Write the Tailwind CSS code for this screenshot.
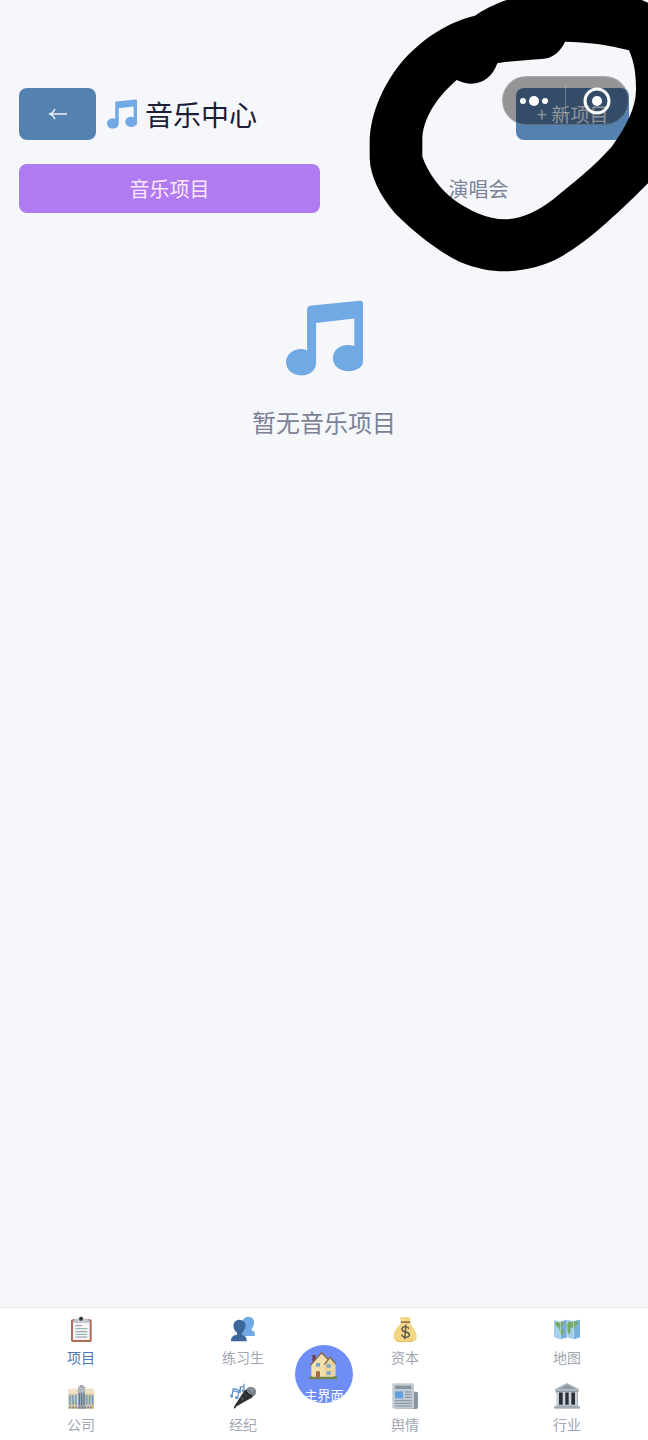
<!DOCTYPE html>
<html lang="zh-CN">
<head>
  <meta charset="UTF-8">
  <meta name="viewport" content="width=device-width, initial-scale=1.0">
  <title>音乐中心</title>
  <script src="https://cdn.jsdelivr.net/npm/@tailwindcss/browser@4"></script>
</head>

<body class="relative flex min-h-screen flex-col overflow-x-hidden bg-[#f5f7fb] font-['Noto_Sans_CJK_SC',sans-serif]">

  <!-- 共用图标 -->
  <svg class="hidden">
    <symbol id="note" viewBox="0 0 230 224">
      <path fill="#71a9e4" d="M63 26q0-8 8-10L220 1q10-1 10 8v174c0 16-19 28-45 28-27 0-45-17-45-39s19-39 45-39q11 0 19 3V54L90 67v118c0 23-19 39-45 39S0 206 0 184s20-39 45-39q10 0 18 4z"/>
    </symbol>
  </svg>

  <!-- 标题栏 -->
  <header class="flex items-center px-[19px] pt-22">
    <button type="button" aria-label="返回" class="flex h-[52px] w-[77px] items-center justify-center rounded-lg bg-[#5581b0]">
      <svg class="h-4 w-5" viewBox="0 0 20 16" fill="none" stroke="#e8f0f8" stroke-width="1.5"><path d="M19 8H2M7 3Q5 7 2 8q3 1 5 5"/></svg>
    </button>
    <h1 class="ml-[11px] flex items-center gap-2 text-[28px] leading-10 text-[#1c2036]">
      <svg class="h-[30px] w-[30px]"><use href="#note"/></svg>
      音乐中心
    </h1>
    <button type="button" class="ml-auto h-[52px] w-[113px] rounded-lg bg-[#5581b0] text-[19px] text-[#f0f4fa]">+ 新项目</button>
  </header>

  <!-- 标签切换 -->
  <div class="mt-6 flex gap-2 px-[19px]">
    <button type="button" class="h-[49px] flex-1 rounded-lg bg-[#b07af0] text-[20px] text-[#fbe9fb]">音乐项目</button>
    <button type="button" class="h-[49px] flex-1 rounded-lg text-[20px] text-[#7c8298]">演唱会</button>
  </div>

  <!-- 空状态 -->
  <main class="flex flex-1 flex-col items-center pt-[87px]">
    <svg class="h-[76px] w-[77px]"><use href="#note"/></svg>
    <p class="mt-7 text-[24px] leading-9 text-[#7c8296]">暂无音乐项目</p>
  </main>

  <!-- 底部导航 -->
  <nav class="relative grid grid-cols-4 gap-y-[9px] border-t border-[#e6e8ee] bg-white pt-[7px] text-center text-[14px] leading-5 text-[#a0a5b1]">
    <a href="#project" class="flex h-[58px] flex-col items-center gap-1 text-[#4a78ba]">
      <svg class="h-7 w-7" viewBox="0 0 84 84">
        <rect x="12" y="13" width="62" height="68" rx="5" fill="#b06a58"/>
        <path fill="#f6f4f5" d="M18 19h50v56H18z"/>
        <path fill="#c4c9d1" d="M16 24q3-12 18-14h3q6-11 12 0h3q14 2 18 14z"/>
        <circle cx="42" cy="11" r="6" fill="#30343b"/>
        <path stroke="#8c9aa6" stroke-width="3" d="M25 32h21M25 50h36M25 66h36"/>
        <path stroke="#78b1ac" stroke-width="3" d="M25 41h36M25 58h36"/>
      </svg>
      项目
    </a>
    <a href="#trainee" class="flex h-[58px] flex-col items-center gap-1">
      <svg class="h-7 w-7" viewBox="0 0 84 84">
        <path fill="#70a9e3" d="M32 63c0-13 8-16 17-19-8-8-12-22-6-31 5-10 24-11 30 0 5 10 1 23-5 28v5c9 3 10 7 10 17z"/>
        <path fill="#3d6798" d="M6 79c0-15 8-18 18-20v-6C12 44 9 24 21 17c9-5 21-3 26 5 6 12 0 26-8 32v6c10 2 14 6 14 19z"/>
      </svg>
      练习生
    </a>
    <a href="#capital" class="flex h-[58px] flex-col items-center gap-1">
      <svg class="h-7 w-7" viewBox="0 0 84 84">
        <path fill="#f4d581" d="m27 5 9 3 8-3 8 3 7-2-3 19c12 15 23 30 21 42-1 12-9 14-35 14S9 79 8 65c-1-13 9-28 23-41z"/>
        <path fill="#e9bf6b" d="m31 26-4 8M12 75q25 6 58 1l-8 5H20z"/>
        <path fill="#97724e" d="M29 19h29v5H29z"/>
        <path fill="none" stroke="#54534f" stroke-width="4" d="M54 41c-3-9-22-8-21 2 1 11 22 5 22 16 0 11-21 10-23 0M45 29l-4 44"/>
      </svg>
      资本
    </a>
    <a href="#map" class="flex h-[58px] flex-col items-center gap-1">
      <svg class="h-7 w-7" viewBox="0 0 84 84">
        <path fill="#a6d0ef" d="m3 15 19 5 20-6 20 5 19-5v53l-19 6-20-6-20 6-19-6z"/>
        <path fill="#79afdc" d="m22 20 20-6v53l-20 6zM62 19l19-5v53l-19 6z"/>
        <path fill="#78a865" d="m6 20 14 3 14-3-4 7 2 4-8 5 2 6 7 5-2 8-6 7-4-12-4-12-8-6zM41 27l7-8 10 3 11-3 7 3-4 8-6 2 1 6-6 3-4-6-4 5-1 13-5 5-4-9-1-9-4-5z"/>
        <path fill="none" stroke="#d7e8ee" stroke-width="2" d="m22 21 0 51M42 15v51M62 20v52"/>
      </svg>
      地图
    </a>
    <a href="#company" class="flex h-[58px] flex-col items-center gap-1">
      <svg class="h-7 w-7" viewBox="0 0 84 84">
        <path fill="#a2aab1" d="M33 14h5V9h12v5h5v67H33z"/>
        <path fill="#dac5a5" d="M4 24q13-5 28-1v58H4zM54 23q15-4 27 1v57H54z"/>
        <path fill="#eee1c6" d="M3 23q14-6 29-1v13H3zM54 22q15-5 28 1v12H54z"/>
        <path stroke="#6ba3ce" stroke-width="5" d="M9 40v28M18 40v28M27 40v28M59 40v28M68 40v28M77 40v28"/>
        <path stroke="#536f86" stroke-width="3" d="M37 34v35M44 34v35M51 34v35"/>
        <path stroke="#747d80" stroke-width="5" stroke-dasharray="5 4" d="M7 76h73"/>
        <path stroke="#d9dee2" stroke-width="2" d="M35 20h18M35 27h18"/>
      </svg>
      公司
    </a>
    <a href="#agent" class="flex h-[58px] flex-col items-center gap-1">
      <svg class="h-7 w-7" viewBox="0 0 84 84">
        <path fill="none" stroke="#6397c5" stroke-width="4" d="m9 41 4-21 18 5-5 22M12 26l18 5M34 28V15l11-2V5v18"/>
        <g fill="#6397c5"><circle cx="8" cy="42" r="5"/><circle cx="23" cy="47" r="5"/><circle cx="32" cy="29" r="4"/><circle cx="42" cy="26" r="4"/></g>
        <path fill="#2e3237" d="m48 23 24 22-49 28-6 7-3-3 4-8z"/>
        <path fill="#777e85" d="M51 23c8-12 22-11 28-1 5 11-1 19-8 22z"/>
        <path fill="none" stroke="#22262b" stroke-width="5" d="M50 24q7 15 20 18"/>
        <path stroke="#a9b1b8" stroke-width="3" d="m61 18 13 13M66 16l10 9"/>
        <path stroke="#a6adb4" stroke-width="3" d="m38 48 4 4"/>
      </svg>
      经纪
    </a>
    <a href="#opinion" class="flex h-[58px] flex-col items-center gap-1">
      <svg class="h-7 w-7" viewBox="0 0 84 84">
        <path fill="#8b959e" d="M64 29h13q4 0 4 5v42q0 5-5 5H14V71h50z"/>
        <rect x="4" y="4" width="65" height="76" rx="4" fill="#c2cbd3"/>
        <path fill="#89939c" d="M12 11h49v10H12z"/>
        <path fill="#60a0dc" d="M12 28h24v21H12z"/>
        <path stroke="#83909b" stroke-width="3" d="M42 30h20M42 38h20M42 46h20M11 56h51M11 64h51M11 72h51"/>
      </svg>
      舆情
    </a>
    <a href="#industry" class="flex h-[58px] flex-col items-center gap-1">
      <svg class="h-7 w-7" viewBox="0 0 84 84">
        <path fill="#292e38" d="M12 25h62v49H12z"/>
        <path fill="#aeb6c0" d="M42 3 78 21v6H6v-6z"/>
        <path fill="#8d97a3" d="m42 8 25 12H17zM8 27h68v5H8z"/>
        <path stroke="#cbd0d6" stroke-width="8" d="M14 30v43M33 30v43M51 30v43M70 30v43"/>
        <path fill="#b8c0ca" d="M8 68h68v6H8z"/>
        <path fill="#a1abb7" d="M3 73h78v7H3z"/>
      </svg>
      行业
    </a>

    <!-- 主界面按钮 -->
    <a href="#home" class="absolute top-[37px] left-1/2 flex h-[58px] w-[58px] -translate-x-1/2 flex-col items-center gap-1 overflow-hidden rounded-full bg-[#6e8df5] pt-1 text-[13px] text-white">
      <svg class="h-8 w-8 shrink-0" viewBox="0 0 96 96">
        <path fill="#6f3f51" d="M13 18h10v22H13z"/>
        <path fill="#f3dfaa" d="m10 47 31-35 17 17 8-5 16 19v44H10z"/>
        <path fill="#ead39c" d="m50 46 16-20 16 18v43H50z"/>
        <path fill="none" stroke="#80674f" stroke-width="4" d="m7 49 34-38 18 19M49 47l17-22 18 20"/>
        <path fill="#75a8cc" d="M24 42h12v11H24zM56 46h12v10H56zM56 67h12v11H56z"/>
        <path fill="#a66849" d="M24 67h12v20H24z"/>
        <path fill="#70864f" d="M3 83q6-3 10 0h11v4h12v-4h40q8-4 12 1v7H3z"/>
      </svg>
      主界面
    </a>
  </nav>

  <!-- 手绘圈 -->
  <svg class="pointer-events-none absolute top-0 right-0 h-[280px] w-[288px]" viewBox="0 0 864 840">
    <path fill="#000" fill-rule="evenodd" d="M440 0C405 12 370 29 345 47C265 65 190 115 133 177C78 240 29 335 29 430V475C31 530 60 587 105 640C160 695 230 752 300 786C350 807 400 815 440 814C500 812 555 797 600 772C690 722 785 628 864 550V8L845 0ZM615 125C680 126 745 134 807 151C824 190 828 225 828 270C828 325 795 385 755 440C705 498 640 547 580 598C530 637 485 656 436 658C380 657 330 632 286 602C240 568 205 520 187 470V412C192 345 240 283 290 240C340 264 391 249 412 190C450 183 505 180 545 177C580 175 602 153 615 125Z"/>
  </svg>

  <!-- 小程序胶囊 -->
  <div class="absolute top-19 right-[19px] flex h-[49px] w-[127px] items-center rounded-full border border-white/20 bg-black/40">
    <button type="button" aria-label="更多" class="flex h-full flex-1 items-center justify-center">
      <svg class="h-3 w-7" viewBox="0 0 28 12" fill="#fff"><circle cx="3" cy="6" r="3"/><circle cx="14" cy="6" r="5"/><circle cx="25" cy="6" r="3"/></svg>
    </button>
    <span class="h-8 w-px bg-white/25"></span>
    <button type="button" aria-label="关闭" class="flex h-full flex-1 items-center justify-center">
      <svg class="h-7 w-7" viewBox="0 0 28 28"><circle cx="14" cy="14" r="12" fill="none" stroke="#fff" stroke-width="3"/><circle cx="14" cy="14" r="5" fill="#fff"/></svg>
    </button>
  </div>

</body>
</html>
